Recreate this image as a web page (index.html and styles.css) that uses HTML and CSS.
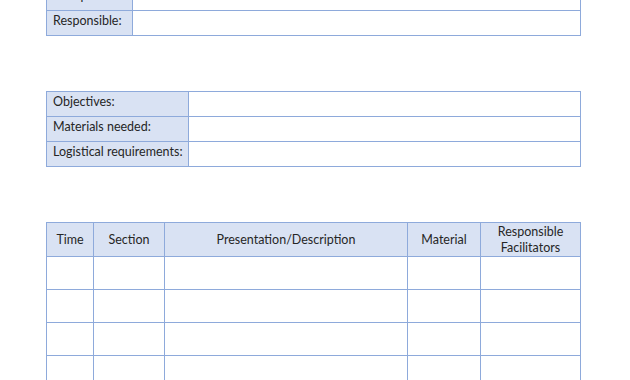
FILE: index.html
```html
<!DOCTYPE html>
<html>
<head>
<meta charset="utf-8">
<link rel="stylesheet" href="styles.css">
</head>
<body>
<div class="page">
  <table class="form form-a">
    <colgroup><col class="lbl-a"><col></colgroup>
    <tr><td class="lbl">Group:</td><td></td></tr>
    <tr><td class="lbl">Responsible:</td><td></td></tr>
  </table>

  <table class="form form-b">
    <colgroup><col class="lbl-b"><col></colgroup>
    <tr><td class="lbl">Objectives:</td><td></td></tr>
    <tr><td class="lbl">Materials needed:</td><td></td></tr>
    <tr><td class="lbl">Logistical requirements:</td><td></td></tr>
  </table>

  <table class="form schedule">
    <colgroup>
      <col class="c-time"><col class="c-section"><col class="c-desc"><col class="c-mat"><col class="c-resp">
    </colgroup>
    <thead>
      <tr>
        <th>Time</th>
        <th>Section</th>
        <th>Presentation/Description</th>
        <th>Material</th>
        <th>Responsible<br>Facilitators</th>
      </tr>
    </thead>
    <tbody>
      <tr><td></td><td></td><td></td><td></td><td></td></tr>
      <tr><td></td><td></td><td></td><td></td><td></td></tr>
      <tr><td></td><td></td><td></td><td></td><td></td></tr>
      <tr><td></td><td></td><td></td><td></td><td></td></tr>
    </tbody>
  </table>
</div>
</body>
</html>
```

FILE: styles.css
```css
html, body {
  margin: 0;
  padding: 0;
  background: #ffffff;
  overflow: hidden;
}
body {
  font-family: Lato, "Liberation Sans", sans-serif;
  font-size: 12.5px;
  color: #262626;
}
.page {
  padding-left: 46px;
  width: 535px;
}
.form {
  border-collapse: collapse;
  width: 535px;
  table-layout: fixed;
}
.form td, .form th {
  border: 1px solid #8eaadb;
  padding: 0 6px;
}
.lbl {
  background: #d9e2f3;
  vertical-align: top;
  padding-top: 2px !important;
  white-space: nowrap;
}
.form-a {
  margin-top: -15px;
}
.form-a tr { height: 25px; }
.lbl-a { width: 86px; }
.form-b {
  margin-top: 55px;
}
.form-b tr { height: 25px; }
.lbl-b { width: 142px; }
.schedule {
  margin-top: 55px;
}
.schedule th {
  background: #d9e2f3;
  font-weight: normal;
  text-align: center;
  height: 33px;
  line-height: 16px;
  padding: 0 2px;
}
.schedule tbody tr { height: 33px; }
.c-time { width: 47px; }
.c-section { width: 71px; }
.c-desc { width: 243px; }
.c-mat { width: 73px; }
.c-resp { width: 100px; }
```
